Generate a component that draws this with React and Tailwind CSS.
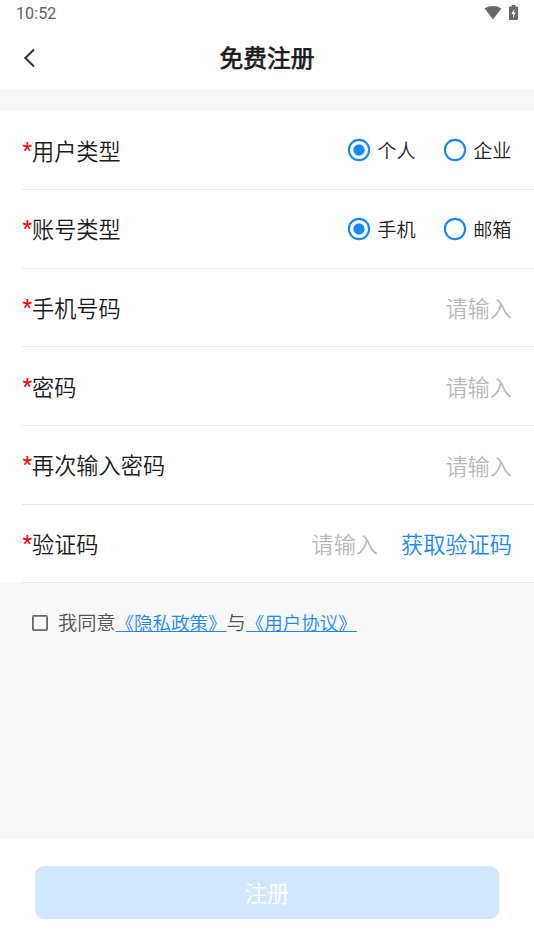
import React, { useState } from "react";

const required = <span className="text-[#fe0000]">*</span>;

// Label on the left, any control on the right
function Row({ label, children }) {
  return (
    <div className="ml-[22px] h-[78.7px] flex items-center justify-between border-b border-[#e8e8e8] pr-[22px]">
      <div className="flex items-center text-[22.2px] leading-8 text-[#1a1a1a] -mt-px">
        <span className="ml-[0.5px] w-[9.5px] font-[Roboto] font-normal text-[22.2px]">{required}</span>
        {label}
      </div>
      {children}
    </div>
  );
}

function Radio({ label, checked, onClick }) {
  return (
    <button type="button" onClick={onClick} className="flex items-center">
      <svg width="24" height="24" viewBox="0 0 24 24" fill="none">
        <circle cx="12" cy="12" r="10.1" stroke="#1989fa" strokeWidth="2.1" />
        {checked && <circle cx="12" cy="12" r="5.7" fill="#1989fa" />}
      </svg>
      <span className="ml-[6px] text-[19.2px] leading-7 text-[#222222]">{label}</span>
    </button>
  );
}

function RadioGroup({ options }) {
  const [value, setValue] = useState(options[0]);

  return (
    <div className="flex items-center gap-[27.5px] mr-[0.5px]">
      {options.map((item) => (
        <Radio key={item} label={item} checked={item === value} onClick={() => setValue(item)} />
      ))}
    </div>
  );
}

function Input({ type = "text" }) {
  return (
    <input type={type} placeholder="请输入" className="w-[180px] h-8 mt-px text-right text-[22.2px] outline-none text-[#1a1a1a] placeholder:text-[#b8b8b8]" />
  );
}

function App() {
  const [agree, setAgree] = useState(false);

  return (
    <div className="w-full h-[950px] flex flex-col bg-[#f8f8f8] font-['Noto_Sans_CJK_SC',sans-serif] font-[350] select-none">
      {/* Status bar */}
      <div className="h-7 shrink-0 flex items-center justify-between bg-white pl-4 pr-4">
        <span className="font-[Roboto] font-normal text-[16px] tracking-[0.1px] text-[#606060]">10:52</span>
        <div className="flex items-start gap-[7px] -mt-[3px]">
          <svg width="18" height="15" viewBox="0 0 18 15" fill="#686868">
            <path d="M9 14.5 L0.6 3.5 C5.4 0.2 12.6 0.2 17.4 3.5 Z" />
          </svg>
          <svg width="9" height="15" viewBox="0 0 9 15">
            <path d="M2.6 0 H6.4 V1.5 H8 Q9 1.5 9 2.5 V14 Q9 15 8 15 H1 Q0 15 0 14 V2.5 Q0 1.5 1 1.5 H2.6 Z" fill="#686868" />
            <path d="M5.5 3.8 L2.4 9 H4 V13 L6.8 7.5 H5 Z" fill="white" />
          </svg>
        </div>
      </div>

      {/* Header */}
      <div className="h-[61px] shrink-0 grid grid-cols-3 items-center bg-white pb-[2px]">
        <svg className="ml-[22px]" width="15" height="20" viewBox="0 0 15 20" fill="none" stroke="#333333" strokeWidth="2">
          <path d="M12 1.5 L3.3 10 L12 18.5" />
        </svg>
        <h1 className="text-center text-[23.7px] leading-9 font-normal text-[#1a1a1a] -mt-px [-webkit-text-stroke:0.7px_#1a1a1a]">免费注册</h1>
      </div>

      {/* Form */}
      <div className="mt-[22.2px] bg-white">
        <Row label="用户类型">
          <RadioGroup options={["个人", "企业"]} />
        </Row>
        <Row label="账号类型">
          <RadioGroup options={["手机", "邮箱"]} />
        </Row>
        <Row label="手机号码">
          <Input type="tel" />
        </Row>
        <Row label="密码">
          <Input type="password" />
        </Row>
        <Row label="再次输入密码">
          <Input type="password" />
        </Row>
        <Row label="验证码">
          <div className="flex items-center gap-[23px]">
            <Input />
            <button type="button" className="-mt-px text-[22.2px] leading-8 text-[#1989fa]">获取验证码</button>
          </div>
        </Row>
      </div>

      {/* Agreement */}
      <div className="mt-[25px] ml-8 flex items-center text-[19.2px] leading-7 text-[#555555]">
        <button type="button" onClick={() => setAgree(!agree)} className="mr-[10px] mt-[2px]">
          <svg width="16" height="16" viewBox="0 0 16 16" fill="none" stroke="#666666" strokeWidth="1.8">
            <rect x="0.9" y="0.9" width="14.2" height="14.2" rx="1" />
            {agree && <path d="M4 8 L7 11 L12 5" />}
          </svg>
        </button>
        <span>我同意</span>
        <a className="text-[18.5px] text-[#1989fa] underline">《隐私政策》</a>
        <span>与</span>
        <a className="text-[18.5px] text-[#1989fa] underline">《用户协议》</a>
      </div>

      {/* Submit */}
      <div className="mt-auto h-[111px] shrink-0 bg-white px-[35px] pt-[27px]">
        <button type="submit" className="w-full h-[53px] rounded-[9px] bg-[#d1e7fe] text-[22.2px] text-white">注册</button>
      </div>
    </div>
  );
}

export default App
